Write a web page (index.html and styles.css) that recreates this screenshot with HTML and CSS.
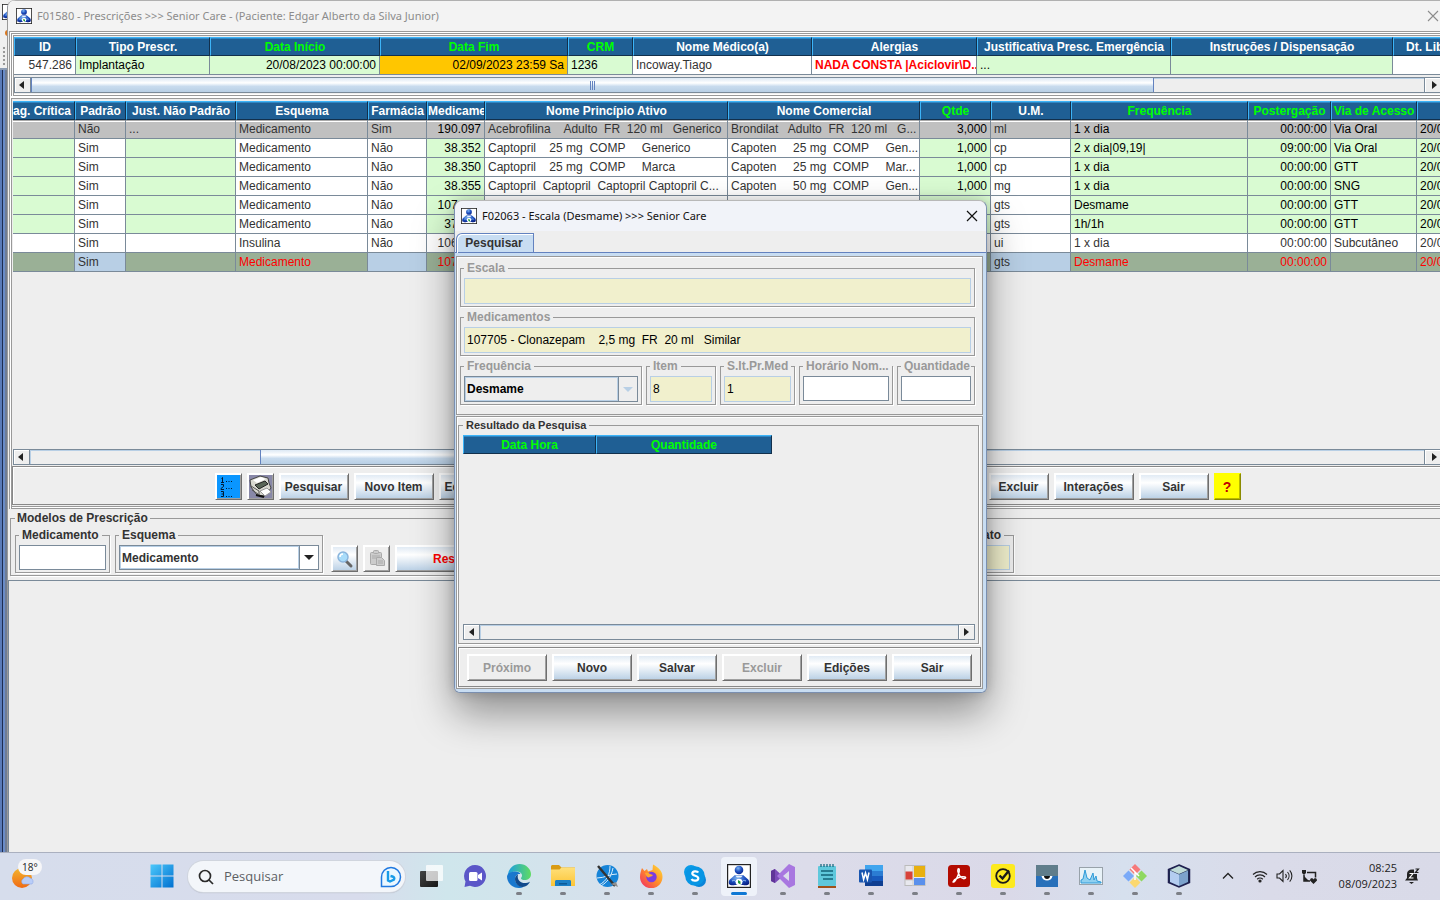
FILE: index.html
```html
<!DOCTYPE html>
<html lang="pt-BR">
<head>
<meta charset="utf-8">
<title>F01580 - Prescrições</title>
<link rel="stylesheet" href="styles.css">
</head>
<body>
<svg class="defs" aria-hidden="true">
  <defs>
    <radialGradient id="ball" cx=".4" cy=".3" r=".8"><stop offset="0" stop-color="#7db4f0"/><stop offset=".5" stop-color="#1c4fc0"/><stop offset="1" stop-color="#061c80"/></radialGradient>
    <linearGradient id="win" x1="0" y1="0" x2="1" y2="1"><stop offset="0" stop-color="#4cc8fb"/><stop offset="1" stop-color="#0070d0"/></linearGradient>
    <linearGradient id="edgeA" x1="0" y1="0" x2="1" y2="0"><stop offset="0" stop-color="#1c9ee0"/><stop offset="1" stop-color="#5fdc62"/></linearGradient>
    <linearGradient id="fold" x1="0" y1="0" x2="0" y2="1"><stop offset="0" stop-color="#ffe07a"/><stop offset="1" stop-color="#fcc436"/></linearGradient>
    <linearGradient id="fox" x1="1" y1="0" x2="0" y2="1"><stop offset="0" stop-color="#ffe23c"/><stop offset=".5" stop-color="#ff8a2a"/><stop offset="1" stop-color="#f0246c"/></linearGradient>
    <linearGradient id="sun" x1="0" y1="0" x2="0" y2="1"><stop offset="0" stop-color="#f3b52e"/><stop offset="1" stop-color="#f06a14"/></linearGradient>
    <linearGradient id="dark" x1="0" y1="0" x2="1" y2="1"><stop offset="0" stop-color="#444"/><stop offset="1" stop-color="#161616"/></linearGradient>
  </defs>
  <symbol id="app" viewBox="0 0 24 24">
    <rect x=".6" y=".6" width="22.8" height="22.8" fill="#fff" stroke="#222" stroke-width="1.2"/>
    <path d="M8 11h8l3.500 3c3 2 3 4 2.500 6-1 1.500-4 1.500-6 1H8c-2 .5-5 .5-6-1-.5-2-.5-4 2.500-6z" fill="url(#ball)"/>
    <path d="M5 17c2-1 3-1 4 1M19 17c-2-1-3-1-4 1" stroke="#9cc4f4" fill="none"/>
    <path d="M8 11.500h8l-2 2h-4z" fill="#e8f0fc"/>
    <circle cx="12" cy="6" r="4.300" fill="url(#ball)"/>
    <ellipse cx="12" cy="18" rx="3.400" ry="3.200" fill="#fff"/>
    <path d="M11 16l2.500 1.500v3L11 19z" fill="#1e9a3c"/>
  </symbol>
</svg>

<main class="desktop">
  <div class="behind" aria-hidden="true"><svg width="16" height="16"><use href="#app"/></svg><i class="dot"></i><i class="grip"></i><i class="wall"></i></div>

  <section class="window">
    <header class="titlebar">
      <svg width="16" height="16"><use href="#app"/></svg>
      <h1>F01580 - Prescrições &gt;&gt;&gt; Senior Care - (Paciente: Edgar Alberto da Silva Junior)</h1>
      <button class="close" aria-label="Fechar"><svg width="12" height="12"><path d="M1 1l10 10M11 1L1 11" stroke="currentColor" stroke-width="1.100"/></svg></button>
    </header>

    <div class="pane pane-top">
      <table class="grid">
        <colgroup><col style="width:62px"><col style="width:134px"><col style="width:170px"><col style="width:188px"><col style="width:65px"><col style="width:179px"><col style="width:165px"><col style="width:194px"><col style="width:222px"><col style="width:60px"></colgroup>
        <thead><tr><th>ID</th><th>Tipo Prescr.</th><th class="ed">Data Início</th><th class="ed">Data Fim</th><th class="ed">CRM</th><th>Nome Médico(a)</th><th>Alergias</th><th>Justificativa Presc. Emergência</th><th>Instruções / Dispensação</th><th class="cut">Dt. Lib</th></tr></thead>
        <tbody><tr><td class="r">547.286</td><td class="g">Implantação</td><td class="g r">20/08/2023 00:00:00</td><td class="o r">02/09/2023 23:59 Sa</td><td class="g">1236</td><td>Incoway.Tiago</td><td class="alert">NADA CONSTA |Aciclovir\D...</td><td class="g">...</td><td class="g"></td><td></td></tr></tbody>
      </table>
      <div class="scroll first">
        <button aria-label="Rolar à esquerda"><svg width="5" height="8"><path d="M5 0v8L0 4z"/></svg></button>
        <div class="track"><div class="thumb" style="width:1123px"><i></i><i></i><i></i></div></div>
        <button aria-label="Rolar à direita"><svg width="5" height="8"><path d="M0 0v8l5-4z"/></svg></button>
      </div>
    </div>

    <div class="pane pane-items">
      <div class="rows">
        <table class="grid items">
          <colgroup><col style="width:62px"><col style="width:51px"><col style="width:110px"><col style="width:132px"><col style="width:59px"><col style="width:58px"><col style="width:243px"><col style="width:192px"><col style="width:71px"><col style="width:80px"><col style="width:177px"><col style="width:83px"><col style="width:86px"><col style="width:60px"></colgroup>
          <thead><tr><th class="lead">ag. Crítica</th><th>Padrão</th><th>Just. Não Padrão</th><th>Esquema</th><th>Farmácia</th><th>Medicamento</th><th>Nome Princípio Ativo</th><th>Nome Comercial</th><th class="ed">Qtde</th><th>U.M.</th><th class="ed">Frequência</th><th class="ed">Postergação</th><th class="ed">Via de Acesso</th><th></th></tr></thead>
          <tbody>
            <tr class="off"><td></td><td>Não</td><td>...</td><td>Medicamento</td><td>Sim</td><td class="k r">190.097</td><td>Acebrofilina    Adulto  FR  120 ml   Generico</td><td>Brondilat   Adulto  FR  120 ml   G...</td><td class="k r">3,000</td><td>ml</td><td class="k">1 x dia</td><td class="k r">00:00:00</td><td class="k">Via Oral</td><td class="k">20/08</td></tr>
            <tr><td class="g"></td><td>Sim</td><td class="g"></td><td>Medicamento</td><td>Não</td><td class="g r">38.352</td><td>Captopril    25 mg  COMP     Generico</td><td>Capoten     25 mg  COMP     Gen...</td><td class="g r">1,000</td><td>cp</td><td class="g">2 x dia|09,19|</td><td class="g r">09:00:00</td><td class="g">Via Oral</td><td class="g">20/08</td></tr>
            <tr><td class="g"></td><td>Sim</td><td class="g"></td><td>Medicamento</td><td>Não</td><td class="g r">38.350</td><td>Captopril    25 mg  COMP     Marca</td><td>Capoten     25 mg  COMP     Mar...</td><td class="g r">1,000</td><td>cp</td><td class="g">1 x dia</td><td class="g r">00:00:00</td><td class="g">GTT</td><td class="g">20/08</td></tr>
            <tr><td class="g"></td><td>Sim</td><td class="g"></td><td>Medicamento</td><td>Não</td><td class="g r">38.355</td><td>Captopril  Captopril  Captopril Captopril C...</td><td>Capoten     50 mg  COMP     Gen...</td><td class="g r">1,000</td><td>mg</td><td class="g">1 x dia</td><td class="g r">00:00:00</td><td class="g">SNG</td><td class="g">20/08</td></tr>
            <tr><td class="g"></td><td>Sim</td><td class="g"></td><td>Medicamento</td><td>Não</td><td class="g r">107.705</td><td></td><td></td><td class="g r"></td><td>gts</td><td class="g">Desmame</td><td class="g r">00:00:00</td><td class="g">GTT</td><td class="g">20/08</td></tr>
            <tr><td class="g"></td><td>Sim</td><td class="g"></td><td>Medicamento</td><td>Não</td><td class="g r">37.705</td><td></td><td></td><td class="g r"></td><td>gts</td><td class="g">1h/1h</td><td class="g r">00:00:00</td><td class="g">GTT</td><td class="g">20/08</td></tr>
            <tr><td></td><td>Sim</td><td></td><td>Insulina</td><td>Não</td><td class="r">106.705</td><td></td><td></td><td></td><td>ui</td><td>1 x dia</td><td class="r">00:00:00</td><td>Subcutâneo</td><td>20/08</td></tr>
            <tr class="sel"><td class="g"></td><td>Sim</td><td class="g"></td><td class="g">Medicamento</td><td></td><td class="g r">107.705</td><td></td><td></td><td class="g"></td><td>gts</td><td class="g">Desmame</td><td class="g r">00:00:00</td><td class="g"></td><td class="g">20/08</td></tr>
          </tbody>
        </table>
      </div>
      <div class="scroll">
        <button aria-label="Rolar à esquerda"><svg width="5" height="8"><path d="M5 0v8L0 4z"/></svg></button>
        <div class="track"><div class="thumb" style="width:600px;margin-left:230px"></div></div>
        <button aria-label="Rolar à direita"><svg width="5" height="8"><path d="M0 0v8l5-4z"/></svg></button>
      </div>
      <div class="toolbar">
        <button class="btn w27 list" aria-label="Lista numerada"><svg width="22" height="22" stroke="#001a33" stroke-width="1" fill="none"><path d="M4.500 2.500l1-1v5M4 6.500h3M9 5.500h1M11.500 5.500h1M14 5.500h1M4 8.500h2.500v2l-2.500 2v1h3M9 12.500h1M11.500 12.500h1M14 12.500h1M4 15.500h2.500v5H4M4.500 18h2M9 20.500h1M11.500 20.500h1M14 20.500h1"/></svg></button>
        <button class="btn w27 print" aria-label="Imprimir"><svg width="23" height="23"><rect width="23" height="23" fill="#8888a8"/><path d="M1 5l10-4 8 2 1 5 2 5-6 8-8-1-6-8z" fill="#d8d8d0" stroke="#444"/><path d="M4 5l8-3 5 2-9 4z" fill="#fff"/><path d="M6 10l10-4 3 3-9 5z" fill="#5a6658" stroke="#222"/><path d="M2 11l8 5v4M3 15l6 4" stroke="#555" fill="none"/><path d="M11 16l7-3 4 4-6 4z" fill="#fff" stroke="#999"/><path d="M7 20l8 2" stroke="#111" stroke-width="2"/></svg></button>
        <button class="btn w70">Pesquisar</button>
        <button class="btn w80">Novo Item</button>
        <button class="btn wide">Ed</button>
        <button class="btn w60">Excluir</button>
        <button class="btn w80">Interações</button>
        <button class="btn w70">Sair</button>
        <button class="btn w27 help">?</button>
      </div>
    </div>

    <fieldset class="group models">
      <legend>Modelos de Prescrição</legend>
      <div class="row">
        <fieldset class="group med"><legend><label for="med">Medicamento</label></legend><input id="med" class="field" type="text"></fieldset>
        <fieldset class="group esq"><legend><label for="esq">Esquema</label></legend><div class="combo"><select id="esq"><option>Medicamento</option></select><span><svg width="10" height="5"><path d="M0 0h10L5 5z"/></svg></span></div></fieldset>
        <button class="btn w27 first" aria-label="Buscar"><svg width="20" height="20"><path d="M11 12l5 5" stroke="#666" stroke-width="3" stroke-linecap="round"/><circle cx="8" cy="8" r="5" fill="#a8dcfa" stroke="#8ab4dc" stroke-width="1.500"/><path d="M5 8a3 3 0 013-3" stroke="#fff" stroke-width="1.500" fill="none"/></svg></button>
        <button class="btn w27" disabled aria-label="Colar"><svg width="20" height="20" fill="#ccc" stroke="#aaa"><rect x="3.500" y="3.500" width="11" height="12" rx="1"/><rect x="6.500" y="1.500" width="5" height="3" rx="1"/><path d="M5 7h8M5 9h4" /><path d="M9.500 8.500h5l3 3v5h-8zM11 12h5M11 14h5"/></svg></button>
        <button class="btn restore">Res</button>
        <fieldset class="group format"><legend><label for="fmt">ato</label></legend><input id="fmt" class="field ro" type="text" readonly></fieldset>
      </div>
    </fieldset>
    <div class="blank"></div>
  </section>

  <section class="dialog" role="dialog" aria-labelledby="dlg">
    <header class="dlg-title">
      <svg width="16" height="16"><use href="#app"/></svg>
      <h2 id="dlg">F02063 - Escala (Desmame) &gt;&gt;&gt; Senior Care</h2>
      <button class="close" aria-label="Fechar"><svg width="12" height="12"><path d="M1 1l10 10M11 1L1 11" stroke="currentColor" stroke-width="1.200"/></svg></button>
    </header>
    <div class="tabs"><button class="tab">Pesquisar</button></div>
    <div class="dlg-body">
      <div class="box form">
        <fieldset class="group"><legend><label for="esc">Escala</label></legend><input id="esc" class="field tall ro" type="text" readonly></fieldset>
        <fieldset class="group"><legend><label for="meds">Medicamentos</label></legend><input id="meds" class="field tall ro" type="text" readonly value="107705 - Clonazepam    2,5 mg  FR  20 ml   Similar"></fieldset>
        <div class="row">
          <fieldset class="group f-freq"><legend><label for="fr">Frequência</label></legend><div class="combo off"><select id="fr" disabled><option>Desmame</option></select><span><svg width="10" height="5"><path d="M0 0h10L5 5z"/></svg></span></div></fieldset>
          <fieldset class="group f-item"><legend><label for="it">Item</label></legend><input id="it" class="field tall ro" type="text" readonly value="8"></fieldset>
          <fieldset class="group f-sit"><legend><label for="si">S.It.Pr.Med</label></legend><input id="si" class="field tall ro" type="text" readonly value="1"></fieldset>
          <fieldset class="group f-hor"><legend><label for="ho">Horário Nom...</label></legend><input id="ho" class="field" type="text"></fieldset>
          <fieldset class="group f-qty"><legend><label for="qt">Quantidade</label></legend><input id="qt" class="field" type="text"></fieldset>
        </div>
      </div>
      <div class="box results">
        <fieldset class="group">
          <legend>Resultado da Pesquisa</legend>
          <div class="res-area"><table class="grid"><colgroup><col style="width:133px"><col style="width:176px"></colgroup><thead><tr><th class="ed">Data Hora</th><th class="ed">Quantidade</th></tr></thead></table></div>
          <div class="scroll">
            <button aria-label="Rolar à esquerda"><svg width="5" height="8"><path d="M5 0v8L0 4z"/></svg></button>
            <div class="track"></div>
            <button aria-label="Rolar à direita"><svg width="5" height="8"><path d="M0 0v8l5-4z"/></svg></button>
          </div>
        </fieldset>
        <div class="actions">
          <button class="btn" disabled>Próximo</button><button class="btn">Novo</button><button class="btn">Salvar</button><button class="btn" disabled>Excluir</button><button class="btn">Edições</button><button class="btn">Sair</button>
        </div>
      </div>
    </div>
  </section>
</main>

<footer class="taskbar">
  <button class="weather" aria-label="Clima 18°"><svg width="34" height="30"><circle cx="12" cy="16" r="10" fill="url(#sun)"/><path d="M13 22a3 3 0 010-5 4.500 4.500 0 017-1 3.500 3.500 0 012 6z" fill="#b9cdf8" stroke="#8fa9e8" stroke-width=".6"/></svg><span>18°</span></button>
  <nav class="tasks">
    <button class="task" aria-label="Iniciar"><svg width="24" height="24" fill="url(#win)"><path d="M.5.500h11v11H.5zM12.500.500h11v11h-11zM.5 12.500h11v11H.5zM12.500 12.500h11v11h-11z"/></svg></button>
    <div class="search">
      <svg width="16" height="16" fill="none" stroke="#2b2b2b" stroke-width="1.700"><circle cx="7" cy="7" r="5.500"/><path d="M11 11l4 4"/></svg>
      <input type="text" aria-label="Pesquisar" placeholder="Pesquisar">
      <svg width="22" height="22" fill="none"><path d="M1.500 20.500V11a9.500 9.500 0 1 1 9.500 9.500z" stroke="#1f78e0" stroke-width="1.500" fill="#eaf7ff"/><path d="M8 5v9.500l2 1 4-2c.8-1.500 0-2.500-1.500-3L10.500 10" stroke="#189be8" stroke-width="2.400"/></svg>
    </div>
    <button class="task" aria-label="Visão de tarefas"><svg width="24" height="24"><rect x="1" y="7" width="18" height="16" rx="1" fill="url(#dark)"/><rect x="7" y="1" width="17" height="16" rx="1" fill="#fff" fill-opacity=".75"/></svg></button>
    <button class="task" aria-label="Chat"><svg width="24" height="24"><path d="M12 1a11 11 0 1 1-5 20.800L1.500 23l1-5.500A11 11 0 0112 1z" fill="#5b57c8"/><rect x="6" y="8" width="8.500" height="9" rx="1.500" fill="#fff"/><path d="M15 11l4-2.500v8L15 14z" fill="#fff"/></svg></button>
    <button class="task run" aria-label="Edge"><svg width="24" height="24"><path d="M1 10C2 4 7 0 12.500 0 19 0 24 5 24 10c0 4-3 6-6.500 6-2 0-3.500-.8-3.500-1.800 0-.7 1-1.200 1-2.700C15 9 12.500 7.500 9 7.500 5 7.500 2 9 1 12z" fill="url(#edgeA)"/><path d="M0 12.500C.5 9 4 7.500 8 7.500c3 0 5 1 5.500 2.500C10 9.500 8 12 8 15c0 4 3.500 8 9 7.500-1.500 1-3.500 1.500-5.500 1.500C5 24 0 18.500 0 12.500z" fill="#1878ce"/><path d="M8 15c0-2 1-4 3-4.500C9.500 16 14 19.500 19 19c2-.3 3-.8 4-1.200-1.500 3-4 5.200-7.500 5.200C11 23 8 19 8 15z" fill="#114a8c"/></svg></button>
    <button class="task run" aria-label="Explorador"><svg width="24" height="24"><path d="M0 2.500C0 1.700.7 1 1.500 1H8l2.500 2.500H24V22H0z" fill="#d99b14"/><path d="M0 5.500h8.500l2-2H24V22H0z" fill="url(#fold)"/><path d="M4 22v-4.500c0-1 .8-1.500 1.500-1.500h13c.8 0 1.500.5 1.500 1.500V22z" fill="#1b7fc6"/><path d="M8 19h8v1.500H8z" fill="#0c5a98"/></svg></button>
    <button class="task run" aria-label="Editor"><svg width="24" height="24"><circle cx="12.500" cy="12" r="11" fill="#1684d8"/><path d="M4 21C12 17 15 10 15 2M6 22c6-4 10-8 12-18M2 14c8 0 12-4 20-4" stroke="#d8ecfa" fill="none"/><path d="M3 2l17 20" stroke="#333" stroke-width="2.400"/><path d="M16 20l7 3-2-5z" fill="#8d8d8d"/></svg></button>
    <button class="task run" aria-label="Firefox"><svg width="24" height="24"><path d="M3 4l2.500 3L8 5l1 2.500L13.500 6 14 .5C19 3 23.500 7 23.500 13a11 11 0 0 1-22.500 0C1 9 2 7 3 4z" fill="url(#fox)"/><circle cx="12.500" cy="13" r="5.200" fill="#7a3ce0"/><path d="M6 9c2-.5 4 0 5 1l3 1c-1 2-3 1-4 2.500-2 0-3-2-4-4.500z" fill="#ffa52e"/></svg></button>
    <button class="task run" aria-label="Skype"><svg width="24" height="24"><circle cx="8" cy="8" r="7" fill="#0a9be8"/><circle cx="16" cy="16" r="7" fill="#0a84d8"/><circle cx="12" cy="12" r="9.800" fill="#0795e4"/><path d="M15.300 8.500c-1-1.500-6-1.700-6 1 0 2.800 6 1.700 6 4.800 0 3-5.600 3-6.800.7" stroke="#fff" stroke-width="2.200" fill="none"/></svg></button>
    <button class="task active" aria-label="Senior Care"><svg width="24" height="24"><use href="#app"/></svg></button>
    <button class="task run" aria-label="Visual Studio"><svg width="24" height="24"><path d="M0 7l4-2 14 13v-11L4 19l-4-2z" fill="#7b4bb8"/><path d="M18 0l6 3v18l-6 3L6 12z" fill="#a877e0"/><path d="M0 7l4-2v14l-4-2z" fill="#5f3598"/><path d="M18 7v10l-6-5z" fill="#dcdcec"/></svg></button>
    <button class="task run" aria-label="Bloco de notas"><svg width="24" height="24"><rect x="3" y="2" width="18" height="20" rx="1" fill="#5fc8dc"/><path d="M6 0v3M9 0v3M12 0v3M15 0v3M18 0v3" stroke="#1a6a80" stroke-width="1.300"/><path d="M6 7h12M6 11h12M8 15h10" stroke="#14647a" stroke-width="1.500"/><path d="M3 22h18v2H3z" fill="#a0521a"/></svg></button>
    <button class="task run" aria-label="Word"><svg width="24" height="24"><path d="M6 1h18v6H6z" fill="#41a5ee"/><path d="M6 7h18v5H6z" fill="#2b7cd3"/><path d="M6 12h18v5H6z" fill="#185abd"/><path d="M6 17h18v5H6z" fill="#103f91"/><rect y="5.500" width="13" height="13" rx="1" fill="#1a56b0"/><path d="M3 8.500l1.600 7L6.500 9l1.900 6.500 1.600-7" stroke="#fff" stroke-width="1.500" fill="none"/></svg></button>
    <button class="task run" aria-label="Formulários"><svg width="24" height="24"><rect x="2" y="1.500" width="20" height="20" fill="#e8e8ee" stroke="#bbb"/><path d="M2 16h20M10 2v20" stroke="#ccc"/><rect x="11" y="2" width="11" height="11" fill="#e8b010"/><rect x="2.500" y="7.500" width="7" height="8" fill="#d8423a"/><rect x="11" y="14" width="11" height="7" fill="#5a90ec"/></svg></button>
    <button class="task run" aria-label="Acrobat"><svg width="24" height="24"><rect x="1" y="1" width="22" height="22" rx="3.500" fill="#b30b00"/><path d="M6 18c1-3 7-6 12-5 2 1-1 2.500-3 1-3-2-5-7-4-9 1.500-1.500 1.800 2 .5 5C10 14 7.500 19 6 18z" stroke="#fff" stroke-width="1.400" fill="none"/></svg></button>
    <button class="task run" aria-label="Norton"><svg width="24" height="24"><rect width="24" height="24" rx="3" fill="#fdea1e"/><circle cx="12" cy="12" r="6.800" stroke="#1a1a1a" stroke-width="1.800" fill="none"/><path d="M8.500 11.500l3 3L18 6.500" stroke="#1a1a1a" stroke-width="2.400" fill="none"/></svg></button>
    <button class="task run" aria-label="Monitor"><svg width="24" height="24"><rect x="1" y="1" width="22" height="22" fill="#2870ba"/><rect x="1" y="1" width="22" height="11" fill="#607d8b"/><path d="M6.500 12h11c-1 6-10 6-11 0z" fill="#fff"/><path d="M9 12h6c0 4-6 4-6 0z" fill="#111"/></svg></button>
    <button class="task run" aria-label="Desempenho"><svg width="24" height="24"><rect x=".5" y="3.500" width="23" height="17" fill="#e8f2f8" stroke="#98a2aa"/><path d="M2 19v-3l2-1 2-9 2 8 3 2 3-7 1 7 2-4 1 5 4 1v1z" fill="#8fd0f0" stroke="#2e9ad8"/></svg></button>
    <button class="task run" aria-label="Git"><svg width="24" height="24"><path d="M12 0l5.500 5.500L12 11 6.500 5.500z" fill="#f67a7a"/><path d="M5.500 6.500L11 12l-5.500 5.500L0 12z" fill="#7aaaf8"/><path d="M18.500 6.500L24 12l-5.500 5.500L13 12z" fill="#8fd860"/><path d="M12 13l5.500 5.500L12 24l-5.500-5.500z" fill="#fbd870"/><path d="M8 4l8 8M12 8v8" stroke="#fff" stroke-width="1.500"/></svg></button>
    <button class="task run" aria-label="NetBeans"><svg width="24" height="24"><path d="M12 1l10.500 4.500v13L12 23 1.500 18.500v-13z" fill="#1f2c50" stroke="#1f2050" stroke-width="1.500"/><path d="M12 2l9 4-9 4-9-4z" fill="#c0dcd8"/><path d="M3 6.500l9 4V22l-9-4z" fill="#b4cdf0"/><path d="M21 6.500l-9 4V22l9-4z" fill="#7ca2cc"/></svg></button>
  </nav>
  <div class="tray">
    <button aria-label="Mostrar ícones ocultos"><svg width="12" height="8" fill="none" stroke="#222" stroke-width="1.300"><path d="M1 6.500l5-5 5 5"/></svg></button>
    <button class="net" aria-label="Rede e som"><svg width="16" height="14" fill="none" stroke="#222" stroke-width="1.200"><path d="M1 5.500a10 10 0 0114 0M3 8a7 7 0 0110 0M5.200 10.200a4 4 0 015.600 0"/><circle cx="8" cy="12" r="1" fill="#222"/></svg><svg width="17" height="14" fill="none" stroke="#222" stroke-width="1.100"><path d="M1 5h2.500L7 1.500v11L3.500 9H1zM9.500 5a3 3 0 010 4M11.500 3a6 6 0 010 8M13.700 1.300a8.500 8.500 0 010 11.400"/></svg><svg width="17" height="15"><path d="M6 3.500h8.500v5M3 6v6h6" stroke="#222" stroke-width="1.500" fill="none"/><path d="M3 7l5 5H3zM1 1v3l2 2 2-2V1" fill="#222"/><path d="M12.500 15L9 11.500c0-3 3-2.500 3.500-1 .5-1.500 3.500-2 3.500 1z" fill="#222"/></svg></button>
    <button class="clock"><time>08:25</time><time>08/09/2023</time></button>
    <button class="bell" aria-label="Notificações"><svg width="15" height="16" fill="#222"><path d="M0 12.500L2 10V6c0-3 2-4.500 5-4.500h2V6h3v4l1 2.500zM4 14h5l-2.500 2z"/><path d="M4.500 5.500h3.500l-3.500 4.500H8.500" stroke="#fff" stroke-width="1.200" fill="none"/><path d="M10.500 1h3L10.500 4.500h3" stroke="#222" stroke-width="1.200" fill="none"/></svg></button>
  </div>
</footer>
</body>
</html>
```
FILE: styles.css
```css
* { box-sizing: border-box; }
body {
  margin: 0;
  height: 100vh;
  display: flex;
  flex-direction: column;
  overflow: hidden;
  background: #eee;
  color: #333;
  font: 12px/14px "Liberation Sans", Arial, sans-serif;
}
button, input, select { font: inherit; color: inherit; }
button { padding: 0; border: 0; background: none; white-space: nowrap; }
svg { display: block; flex: none; }
.defs { position: absolute; width: 0; height: 0; }
h1, h2 { margin: 0; font: 11px/16px "Noto Sans", "Open Sans", sans-serif; white-space: nowrap; }

.desktop { flex: 1; min-height: 0; position: relative; display: flex; overflow: hidden; }
.behind { width: 8px; display: flex; flex-direction: column; overflow: hidden; background: #f0f0f0; padding-top: 4px; }
.behind svg { margin-left: 2px; }
.behind .dot { width: 3px; height: 6px; margin: 10px 0 10px 5px; border-radius: 3px 0 0 3px; background: #d97820; }
.behind .grip { height: 20px; margin: 0 0 2px 2px; background: radial-gradient(circle, #999 1px, #eee 1px) 0 0 / 4px 4px; }
.behind .wall { flex: 1; border-top: 2px solid #8c9cb4; background: linear-gradient(90deg, #5a7bb8 2px, #1c2c50 2px, #1c2c50 3px, #6a8cc8 3px, #6a8cc8 5px, #6e7c94 5px); }

.window { flex: 1; min-width: 0; display: flex; flex-direction: column; overflow: hidden; background: #eee; border-radius: 8px 0 0 0; box-shadow: -1px 0 #999; }
.titlebar { height: 31px; display: flex; align-items: center; gap: 5px; padding: 0 0 1px 8px; background: #f3f3f3; border-top: 1px solid #b0b0b0; color: #8c8c8c; }
.titlebar h1 { flex: 1; }
.close { width: 13px; height: 24px; display: flex; align-items: center; }

.pane { margin-left: 1px; }
.pane-top { padding: 6px 0 3px 5px; box-shadow: inset 1px 1px #999, inset 2px 2px #fff, inset 3px 3px #999, inset 4px 4px #fff, inset 5px 5px #999, inset 0 -1px #999, inset 0 -2px #fff; overflow: hidden; }
.pane-items { padding: 5px 0 4px 4px; box-shadow: inset 1px 0 #999, inset 2px 2px #fff, inset 3px 3px #999, inset 0 -1px #999, inset 0 -2px #fff, inset 0 -3px #999; }
.rows { height: 348px; overflow: hidden; }

.grid { width: 0; table-layout: fixed; border-collapse: separate; border-spacing: 0; }
.grid th, .grid td { height: 19px; padding: 0 0 0 3px; overflow: hidden; white-space: pre; }
.grid th { padding: 0; background: #1f5f94; color: #fff; border: 1px solid; border-color: #3cb4f8 #12304c #12304c #3cb4f8; box-shadow: inset 0 1px #2f86c4; }
.grid th.ed { color: #0f0; }
.grid th.lead { text-align: left; border-left: 0; }
.grid th.cut { text-align: left; padding-left: 12px; }
.grid td { background: #fff; border: solid #7a8a99; border-width: 0 1px 1px 0; }
.grid .r { text-align: right; padding-right: 3px; }
.grid .g { background: #d9fbd2; color: #000; }
.grid .o { background: #ffc600; color: #000; }
.grid .k { color: #000; }
.grid .alert { color: #f00; font-weight: bold; }
.grid .off td { background: #c0c0c0; box-shadow: inset 0 1px #aaa, inset 0 2px #fff; }
.grid .sel td { background: #b8cfe5; }
.grid .sel .g { background: #9ab096; color: #f00; }

.scroll { height: 16px; display: flex; border: solid #7a8a99; border-width: 1px 0 1px 1px; }
.scroll.first { margin-top: 2px; }
.scroll button { width: 15px; display: flex; align-items: center; justify-content: center; box-shadow: inset 1px 1px #fff; }
.pane .scroll button:first-child { padding-right: 2px; }
.pane .scroll button:last-child { padding-left: 3px; }
.scroll button svg { fill: #222; }
.track { flex: 1; min-width: 0; border: solid #7a8a99; border-width: 0 1px; box-shadow: inset 1px 1px #b8cfe5; display: flex; }
.thumb { flex: none; display: flex; align-items: center; justify-content: center; gap: 1px; border: 1px solid #6382bf; border-width: 0 1px; background: linear-gradient(#dce8f4, #fff 35%, #c8dbee 60%, #b8cfe5); }
.thumb i { width: 1px; height: 9px; background: #6382bf; }

.btn { height: 27px; display: flex; align-items: center; justify-content: center; flex: none; font-weight: bold; color: #333; border: 1px solid; border-color: #fff #6e6e6e #6e6e6e #fff; box-shadow: inset 1px 1px #fff, inset -1px -1px #a0a0a0; background: linear-gradient(#dde8f3, #fff 35%, #b8cfe5); }
.btn:disabled { background: #eee; color: #999; }
.w27 { width: 27px; }
.w60 { width: 60px; }
.w70 { width: 70px; }
.w80 { width: 80px; }
.toolbar { display: flex; justify-content: center; gap: 5px; margin: 1px 0 0 -1px; padding: 6px 0 4px 2px; border: solid #888; border-width: 1px 0 1px 1px; box-shadow: inset 1px 1px #fff; }
.toolbar .wide { width: 545px; justify-content: flex-start; padding-left: 5px; }
.list { background: #0a96ff; }
.print { background: #8888a8; }
.help { background: #ff0; color: #c00000; font-size: 14px; border-color: #ff0 #8a8a00 #8a8a00 #ff0; box-shadow: inset -1px -1px #b8b800; }

.group { margin: 0; min-width: 0; padding: 3px 3px 2px; border: 1px solid #999; box-shadow: 1px 1px #fff; }
.group legend { padding: 0 3px; font-weight: bold; line-height: 14px; white-space: nowrap; }
.row { display: flex; align-items: flex-end; }
.field { display: block; width: 100%; height: 25px; padding: 0 2px; border: 1px solid #7a8a99; background: #fff; border-radius: 0; outline: 0; }
.field.tall { height: 26px; }
.field.ro { background: #f1f0cd; border-color: #b8cfe5; color: #000; }
.combo { display: flex; height: 26px; border: 1px solid #7a8a99; background: #fff; }
.combo select { flex: 1; min-width: 0; appearance: none; border: 1px solid #b8cfe5; border-radius: 0; padding: 0 1px; background: transparent; font-weight: bold; outline: 0; }
.combo span { width: 19px; display: flex; align-items: center; justify-content: center; border-left: 1px solid #7a8a99; }
.combo svg { fill: #222; }
.combo.off { background: #eee; }
.combo.off select { color: #000; opacity: 1; }
.combo.off svg { fill: #b8cfe5; }

.models { margin: 2px 0 0 2px; padding: 3px 4px 2px; border-right: 0; }
.models > legend { padding: 0 2px; }
.models > .row { gap: 5px; }
.models .group { padding-bottom: 2px; }
.models .combo { height: 25px; }
.models .btn { margin-bottom: 1px; }
.models .btn.first { margin-left: 3px; }
.med { width: 95px; }
.esq { width: 208px; }
.models .restore { width: 400px; justify-content: flex-start; padding-left: 37px; color: #f00; }
.format { width: 214px; }
.format legend { margin: 0 6px 0 auto; }
.blank { flex: 1; margin-top: 4px; border: solid #7a8a99; border-width: 1px 0 0 1px; }

.dialog { position: absolute; left: 454px; top: 200px; width: 533px; background: #eee; border: 1px solid #7a8fb0; border-top-color: #b8b8b8; border-radius: 8px 8px 6px 6px; box-shadow: 0 20px 40px rgba(0,0,0,.4), 0 0 12px rgba(0,0,0,.18); }
.dlg-title { height: 30px; display: flex; align-items: center; gap: 5px; padding: 0 5px 0 6px; background: #f1f3f9; border-radius: 8px 8px 0 0; color: #111; }
.dlg-title h2 { flex: 1; }
.dlg-title .close { width: 15px; }
.tabs { display: flex; height: 22px; padding: 2px 0 0 1px; border-bottom: 1px solid #6382bf; }
.tab { width: 78px; height: 20px; padding: 0 2px 1px 0; font-weight: bold; background: #c8ddf2; border: 1px solid #6382bf; border-bottom: 0; border-radius: 6px 0 0 0; box-shadow: inset 1px 1px #fff, inset 0 -1px #6382bf; }
.dlg-body { border: solid #c8ddf2; border-width: 3px 3px 3px 1px; border-radius: 0 0 5px 5px; }
.box { border: 1px solid #999; box-shadow: inset 1px 1px #fff; }
.form { padding: 4px 7px 9px 3px; display: flex; flex-direction: column; gap: 3px; color: #999; }
.form .row { gap: 4px; }
.form .row .group { height: 46px; }
.f-freq { flex: 1 1 182px; }
.f-item { flex: 0 0 70px; }
.f-sit { flex: 0 0 75px; }
.f-hor { flex: 0 0 94px; }
.f-qty { flex: 0 0 78px; }
.f-qty legend { padding: 0 1px 0 3px; }
.results { margin-top: 1px; padding: 1px; }
.results > .group { margin-right: 2px; padding: 3px 3px 3px 4px; }
.results legend { font-size: 11px; }
.res-area { height: 189px; }
.results .scroll { border-width: 1px; }
.actions { display: flex; gap: 5px; margin-top: 3px; padding: 6px 8px 5px; border: 1px solid #888; box-shadow: inset 1px 1px #fff; }
.actions .btn { flex: 1; }

.taskbar { height: 48px; flex: none; display: flex; align-items: stretch; border-top: 1px solid #aab0bf; background: linear-gradient(90deg, #d6ddec 0, #d8dcec 25%, #cfe6ec 31%, #d2e4ec 36%, #d8dfec 45%, #dcdcea 56%, #dad9e8 70%, #d6e0ee 78%, #dadbe9 88%, #d9dae8); font-family: "Open Sans", "Noto Sans", sans-serif; color: #222; }
.weather { width: 140px; position: relative; }
.weather svg { margin-left: 10px; }
.weather span { position: absolute; left: 18px; top: 6px; padding: 0 4px; border-radius: 8px; background: #f6f6f8; font-size: 10px; line-height: 16px; }
.tasks { display: flex; padding-bottom: 1px; }
.task { width: 44px; display: flex; align-items: center; justify-content: center; position: relative; }
.task.run::after, .task.active::after { content: ""; position: absolute; bottom: 4px; left: 19px; width: 6px; height: 3px; border-radius: 2px; background: #7c7f86; }
.task.active::before { content: ""; position: absolute; left: 4px; right: 4px; top: 4px; bottom: 3px; border-radius: 4px; background: #eef2f9; }
.task.active svg { position: relative; }
.task.active::after { left: 14px; width: 16px; background: #0f78d4; }
.search { width: 217px; height: 31px; margin: 8px 4px 0; padding: 0 3px 0 10px; display: flex; align-items: center; gap: 10px; border-radius: 16px; background: #f3f6fa; box-shadow: 0 0 0 1px #d0d5de, 0 1px 1px #a8aebb; }
.search input { flex: 1; min-width: 0; border: 0; outline: 0; padding: 0 0 2px; background: none; font-size: 13px; }
.search input::placeholder { color: #5c5f64; opacity: 1; }
.tray { margin-left: auto; display: flex; align-items: center; padding: 0 20px 1px 0; }
.net { display: flex; align-items: center; gap: 8px; margin: 0 17px 0 18px; }
.clock { display: flex; flex-direction: column; align-items: flex-end; min-width: 62px; font-size: 11px; line-height: 16px; }
.bell { margin-left: 8px; }
```
